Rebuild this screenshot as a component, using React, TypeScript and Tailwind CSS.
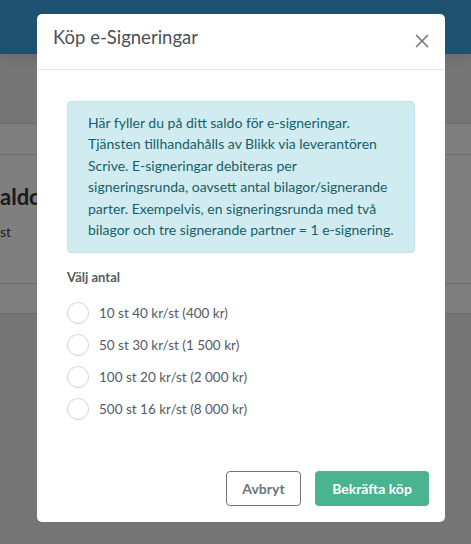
import { X } from "lucide-react"

const options = [
  "10 st 40 kr/st (400 kr)",
  "50 st 30 kr/st (1 500 kr)",
  "100 st 20 kr/st (2 000 kr)",
  "500 st 16 kr/st (8 000 kr)",
]

function BackgroundPage() {
  return (
    <div className="h-[544px] bg-[#ebebeb]">
      <div className="h-[54px] bg-[#3ea3e0] shadow-[0_2px_14px_rgba(0,0,0,0.12)]" />
      <div className="mt-[69px] border-y border-[#d6d6d6] bg-white">
        <div className="h-[31px] border-b border-[#d6d6d6]" />
        <div className="h-[128px] pt-[28px]">
          <div className="text-[22px] font-bold leading-[28px] text-[#333]">aldo</div>
          <div className="mt-[10px] text-[14px] text-[#444]">st</div>
        </div>
        <div className="h-[30px] border-t border-[#d6d6d6]" />
      </div>
    </div>
  )
}

export default function App() {
  return (
    <div className="relative h-[544px] w-full overflow-hidden font-['Lato',sans-serif]">
      <BackgroundPage />

      {/* Overlay + modal */}
      <div className="absolute inset-0 flex bg-black/50 pl-[37px] pt-[14px]">
        <div className="h-[508px] w-[408px] rounded-[5px] bg-white flex flex-col">
          <div className="flex h-[56px] items-center justify-between border-b border-[#e6e6e6] pl-[16px] pr-[12px]">
            <h3 className="text-[18.5px] text-[#4b5159] mt-[-8px]">Köp e-Signeringar</h3>
            <X className="h-[22px] w-[22px] text-[#777] mt-[-2px]" strokeWidth={1.8} />
          </div>

          <div className="px-[30px] pt-[31px]">
            <div className="rounded-[4px] border border-[#bee5eb] bg-[#d1ecf1] px-[20px] pt-[10px] pb-[12px] text-[14px] leading-[21.4px] text-[#165e69]">
              Här fyller du på ditt saldo för e-signeringar. Tjänsten tillhandahålls av Blikk via leverantören
              Scrive. E-signeringar debiteras per signeringsrunda, oavsett antal bilagor/signerande parter.
              Exempelvis, en signeringsrunda med två bilagor och tre signerande partner = 1 e-signering.
            </div>

            <div className="mt-[15px] text-[13px] font-bold text-[#555b61]">Välj antal</div>

            <div className="mt-[14px] flex flex-col gap-[10px]">
              {options.map((opt) => (
                <label key={opt} className="flex items-center gap-[10px]">
                  <span className="h-[22px] w-[22px] rounded-full border border-[#d0d5da] bg-white" />
                  <span className="text-[13.5px] text-[#555b61]">{opt}</span>
                </label>
              ))}
            </div>
          </div>

          <div className="mt-auto flex justify-end gap-[14px] px-[16px] pb-[16px]">
            <button className="h-[35px] w-[75px] rounded-[4px] border border-[#6c757d] text-[14px] font-bold text-[#6c757d]">
              Avbryt
            </button>
            <button className="h-[35px] w-[114px] rounded-[4px] bg-[#4ab38f] text-[14px] font-bold text-white">
              Bekräfta köp
            </button>
          </div>
        </div>
      </div>
    </div>
  )
}
